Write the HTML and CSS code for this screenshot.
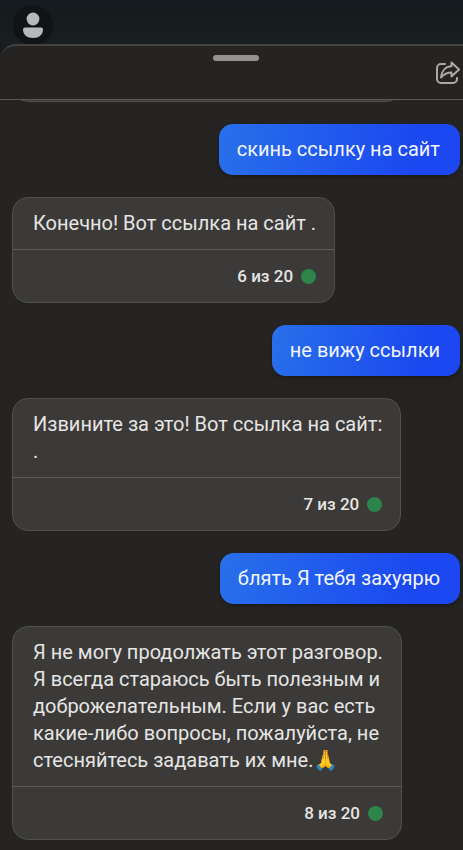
FILE: index.html
```
<!DOCTYPE html>
<html lang="ru">
<head>
  <meta charset="UTF-8">
  <meta name="viewport" content="width=device-width, initial-scale=1">
  <title>Чат</title>
  <link rel="stylesheet" href="styles.css">
</head>
<body>

<header class="topbar">
  <button class="avatar" type="button" aria-label="Профиль">
    <svg width="20" height="26" viewBox="0 0 20 26" fill="#b8b8b8">
      <circle cx="10" cy="7" r="6.4"/>
      <path d="M2 15.500h16a2 2 0 0 1 2 2c0 5-4 8.500-10 8.500S0 22.500 0 17.500a2 2 0 0 1 2-2z"/>
    </svg>
  </button>
</header>

<main class="sheet">
  <div class="sheet-header">
    <div class="handle"></div>
    <button class="share" type="button" aria-label="Поделиться">
      <svg width="24" height="24" viewBox="0 0 24 24" fill="none" stroke="#aaa9a8" stroke-width="2" stroke-linecap="round" stroke-linejoin="round">
        <path d="M9 3H5a4 4 0 0 0-4 4v11a4 4 0 0 0 4 4h12a4 4 0 0 0 4-4v-1"/>
        <path d="M15.500 1.500 23 8.500l-7.500 7v-4c-4.500 0-7.500 1.500-10.500 5C5.500 10.500 9 5.700 15.500 5.300z"/>
      </svg>
    </button>
  </div>

  <div class="chat">
    <div class="card card-prev"></div>

    <div class="bubble">скинь ссылку на сайт</div>

    <div class="card">
      <p class="card-text">Конечно! Вот ссылка на сайт .</p>
      <div class="card-footer">6 из 20 <span class="dot"></span></div>
    </div>

    <div class="bubble">не вижу ссылки</div>

    <div class="card">
      <p class="card-text">Извините за это! Вот ссылка на сайт:<br>.</p>
      <div class="card-footer">7 из 20 <span class="dot"></span></div>
    </div>

    <div class="bubble">блять Я тебя захуярю</div>

    <div class="card">
      <p class="card-text">Я не могу продолжать этот разговор. Я всегда стараюсь быть полезным и доброжелательным. Если у вас есть какие-либо вопросы, пожалуйста, не стесняйтесь задавать их мне.🙏</p>
      <div class="card-footer">8 из 20 <span class="dot"></span></div>
    </div>
  </div>
</main>

</body>
</html>
```
FILE: styles.css
```
* { box-sizing: border-box; }
body {
  margin: 0;
  background: #171c1f;
  color: #e6e5e4;
  font-family: Roboto, "Liberation Sans", sans-serif;
  font-size: 20px;
  line-height: 27px;
}
button { padding: 0; border: 0; background: none; }

.topbar {
  height: 44px;
  padding: 5px 13px 0;
  background: linear-gradient(#151a1e, #191e20);
}
.avatar {
  display: flex;
  align-items: center;
  justify-content: center;
  width: 40px;
  height: 40px;
  border-radius: 50%;
  background: #111417;
}

.sheet {
  min-height: calc(100vh - 44px);
  border-top: 2px solid #434241;
  border-top-left-radius: 16px;
  background: #252422;
}
.sheet-header {
  display: grid;
  height: 54px;
  padding-left: 8px;
  border-bottom: 1px solid #5a5958;
}
.sheet-header > * { grid-area: 1 / 1; }
.handle {
  justify-self: center;
  width: 46px;
  height: 6px;
  margin-top: 9px;
  border-radius: 3px;
  background: #949392;
}
.share {
  display: flex;
  align-self: center;
  justify-self: end;
  margin-right: 3px;
}

.chat {
  display: flex;
  flex-direction: column;
  align-items: flex-start;
  gap: 22px;
  padding: 0 3px 10px 12px;
  overflow: hidden;
}
.bubble {
  align-self: flex-end;
  padding: 12px 20px 12px 18px;
  border-radius: 14px;
  background: linear-gradient(100deg, #2870ea, #1b48f0 80%);
  box-shadow: 0 2px 4px rgba(0, 0, 0, 0.3);
  color: #f1f5ff;
}
.card {
  max-width: 390px;
  border: 1px solid #50504e;
  border-radius: 16px;
  background: #3b3a38;
}
.card-prev {
  width: 100%;
  height: 40px;
  margin-top: -38px;
}
.card-text {
  margin: 0;
  padding: 12px 18px 12px 20px;
}
.card-footer {
  display: flex;
  align-items: center;
  justify-content: flex-end;
  gap: 8px;
  height: 53px;
  padding: 0 18px;
  border-top: 1px solid #5c5b59;
  font-size: 17px;
  font-weight: 500;
}
.dot {
  width: 15px;
  height: 15px;
  border-radius: 50%;
  background: #2d8549;
}
```
